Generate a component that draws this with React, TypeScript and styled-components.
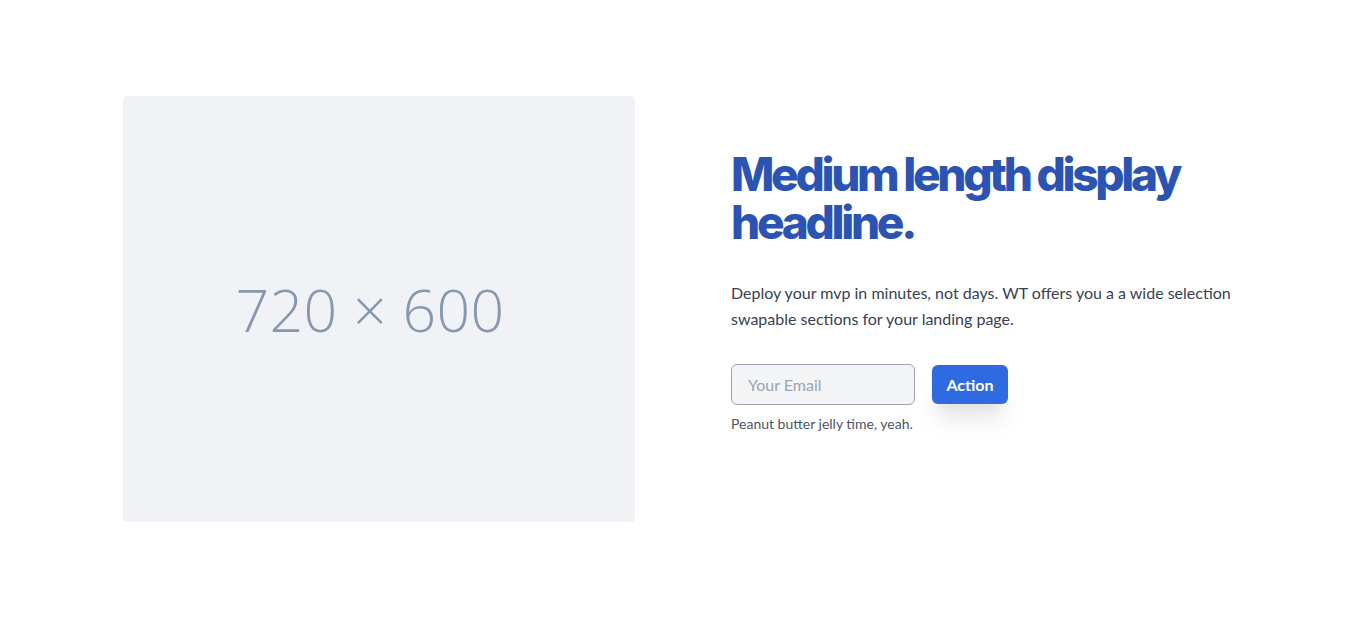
import React from "react";
import styled, { createGlobalStyle } from "styled-components";

const Global = createGlobalStyle`
  * { box-sizing: border-box; }
  html, body { margin: 0; padding: 0; background: #ffffff; }
  body { font-family: "Lato", "Inter", sans-serif; -webkit-font-smoothing: antialiased; }
`;

const Section = styled.section`
  padding: 96px 0;
  background: #ffffff;
`;

const Container = styled.div`
  width: 1120px;
  margin: 0 auto;
  display: grid;
  grid-template-columns: 512px 512px;
  column-gap: 96px;
`;

const Placeholder = styled.div`
  width: 512px;
  height: 426px;
  border-radius: 4px;
  background: #f1f2f6;
  display: flex;
  align-items: center;
  justify-content: center;
  padding-right: 18px;
  color: #8797b0;
  font-family: "Open Sans", sans-serif;
  font-weight: 300;
  font-size: 59px;
  letter-spacing: 0.3px;
`;

const Content = styled.div`
  display: flex;
  flex-direction: column;
  justify-content: center;
  padding-bottom: 34px;
`;

const Headline = styled.h1`
  margin: 0;
  font-family: "Inter", sans-serif;
  font-weight: 800;
  font-size: 46px;
  line-height: 48px;
  letter-spacing: -3.3px;
  color: #2b53b4;
`;

const Lead = styled.p`
  margin: 34px 0 0;
  font-size: 16px;
  line-height: 26px;
  color: #374151;
`;

const Form = styled.form`
  margin-top: 32px;
  display: flex;
  align-items: center;
  gap: 17px;
`;

const Input = styled.input`
  width: 184px;
  height: 41px;
  padding: 0 16px;
  border: 1px solid #9ca3af;
  border-radius: 6px;
  background: #f3f4f6;
  font-family: inherit;
  font-size: 16px;
  color: #374151;
  outline: none;
  &::placeholder { color: #9ca3af; }
`;

const Button = styled.button`
  width: 76px;
  height: 39px;
  padding: 0;
  border: none;
  border-radius: 6px;
  background: #2e6ae1;
  color: #ffffff;
  font-family: inherit;
  font-size: 16px;
  font-weight: 700;
  cursor: pointer;
  box-shadow: 0 20px 25px -5px rgba(0, 0, 0, 0.1), 0 10px 10px -5px rgba(0, 0, 0, 0.04);
`;

const Note = styled.p`
  margin: 9px 0 0;
  font-size: 14px;
  line-height: 20px;
  color: #4b5563;
`;

export default function App() {
  return (
    <>
      <Global />
      <Section>
        <Container>
          <Placeholder>720 × 600</Placeholder>
          <Content>
            <Headline>Medium length display headline.</Headline>
            <Lead>
              Deploy your mvp in minutes, not days. WT offers you a a wide selection swapable
              sections for your landing page.
            </Lead>
            <Form onSubmit={(e) => e.preventDefault()}>
              <Input type="email" placeholder="Your Email" />
              <Button type="submit">Action</Button>
            </Form>
            <Note>Peanut butter jelly time, yeah.</Note>
          </Content>
        </Container>
      </Section>
    </>
  );
}
